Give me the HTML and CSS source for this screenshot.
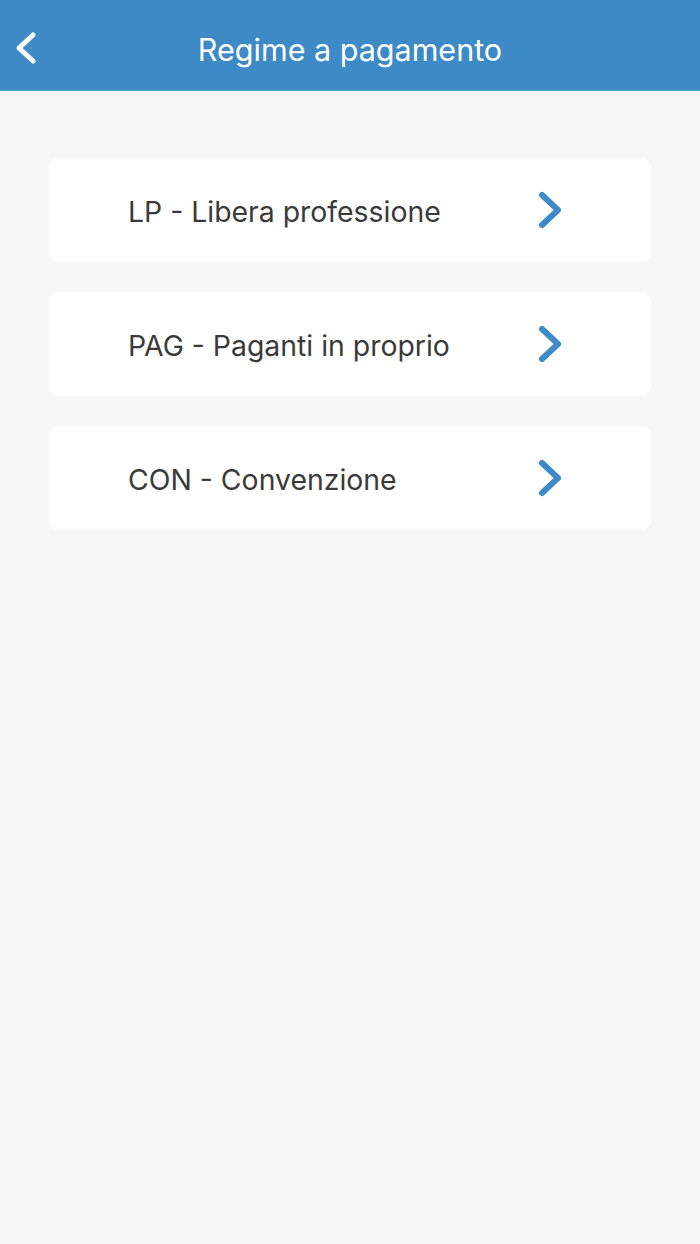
FILE: index.html
```html
<!DOCTYPE html>
<html>
<head>
  <meta charset="UTF-8">
  <meta name="viewport" content="width=device-width, initial-scale=1.0">
  <title>Regime a pagamento</title>
  <link rel="stylesheet" href="styles.css">
</head>
<body>
  <header class="barra">
    <a href="#" class="indietro">
      <svg width="26" height="34" viewBox="0 0 26 34">
        <path d="M21 4 L7 17 L21 30" fill="none" stroke="#fff" stroke-width="5" stroke-linecap="round" stroke-linejoin="round"/>
      </svg>
    </a>
    <h1 class="titolo">Regime a pagamento</h1>
  </header>

  <main class="lista">
    <a href="#" class="voce">
      <span class="testo">LP - Libera professione</span>
      <svg class="freccia" width="28" height="40" viewBox="0 0 28 40">
        <path d="M5 5 L21 20 L5 35" fill="none" stroke="#3d8ac7" stroke-width="6" stroke-linecap="round" stroke-linejoin="round"/>
      </svg>
    </a>
    <a href="#" class="voce">
      <span class="testo">PAG - Paganti in proprio</span>
      <svg class="freccia" width="28" height="40" viewBox="0 0 28 40">
        <path d="M5 5 L21 20 L5 35" fill="none" stroke="#3d8ac7" stroke-width="6" stroke-linecap="round" stroke-linejoin="round"/>
      </svg>
    </a>
    <a href="#" class="voce">
      <span class="testo">CON - Convenzione</span>
      <svg class="freccia" width="28" height="40" viewBox="0 0 28 40">
        <path d="M5 5 L21 20 L5 35" fill="none" stroke="#3d8ac7" stroke-width="6" stroke-linecap="round" stroke-linejoin="round"/>
      </svg>
    </a>
  </main>
</body>
</html>
```

FILE: styles.css
```css
body {
  margin: 0;
  font-family: Inter, "Noto Sans", sans-serif;
  background-color: #f7f7f7;
  min-height: 1244px;
}

.barra {
  height: 91px;
  box-sizing: border-box;
  padding-top: 8px;
  background-color: #3d8ac7;
  border-bottom: 1px solid #5aa0d6;
  display: flex;
  align-items: center;
  justify-content: center;
  position: relative;
}

.indietro {
  position: absolute;
  left: 12px;
  top: 31px;
  display: flex;
}

.titolo {
  margin: 0;
  color: white;
  font-size: 30.5px;
  font-weight: 400;
}

.lista {
  padding: 67px 49px 0;
  display: flex;
  flex-direction: column;
  gap: 30px;
}

.voce {
  height: 104px;
  background-color: white;
  border-radius: 9px;
  display: flex;
  align-items: center;
  padding: 0 86px 0 79px;
  text-decoration: none;
}

.testo {
  flex: 1;
  color: #3a3a3a;
  font-size: 28.4px;
  padding-top: 2px;
}

.freccia {
  display: block;
}
```
